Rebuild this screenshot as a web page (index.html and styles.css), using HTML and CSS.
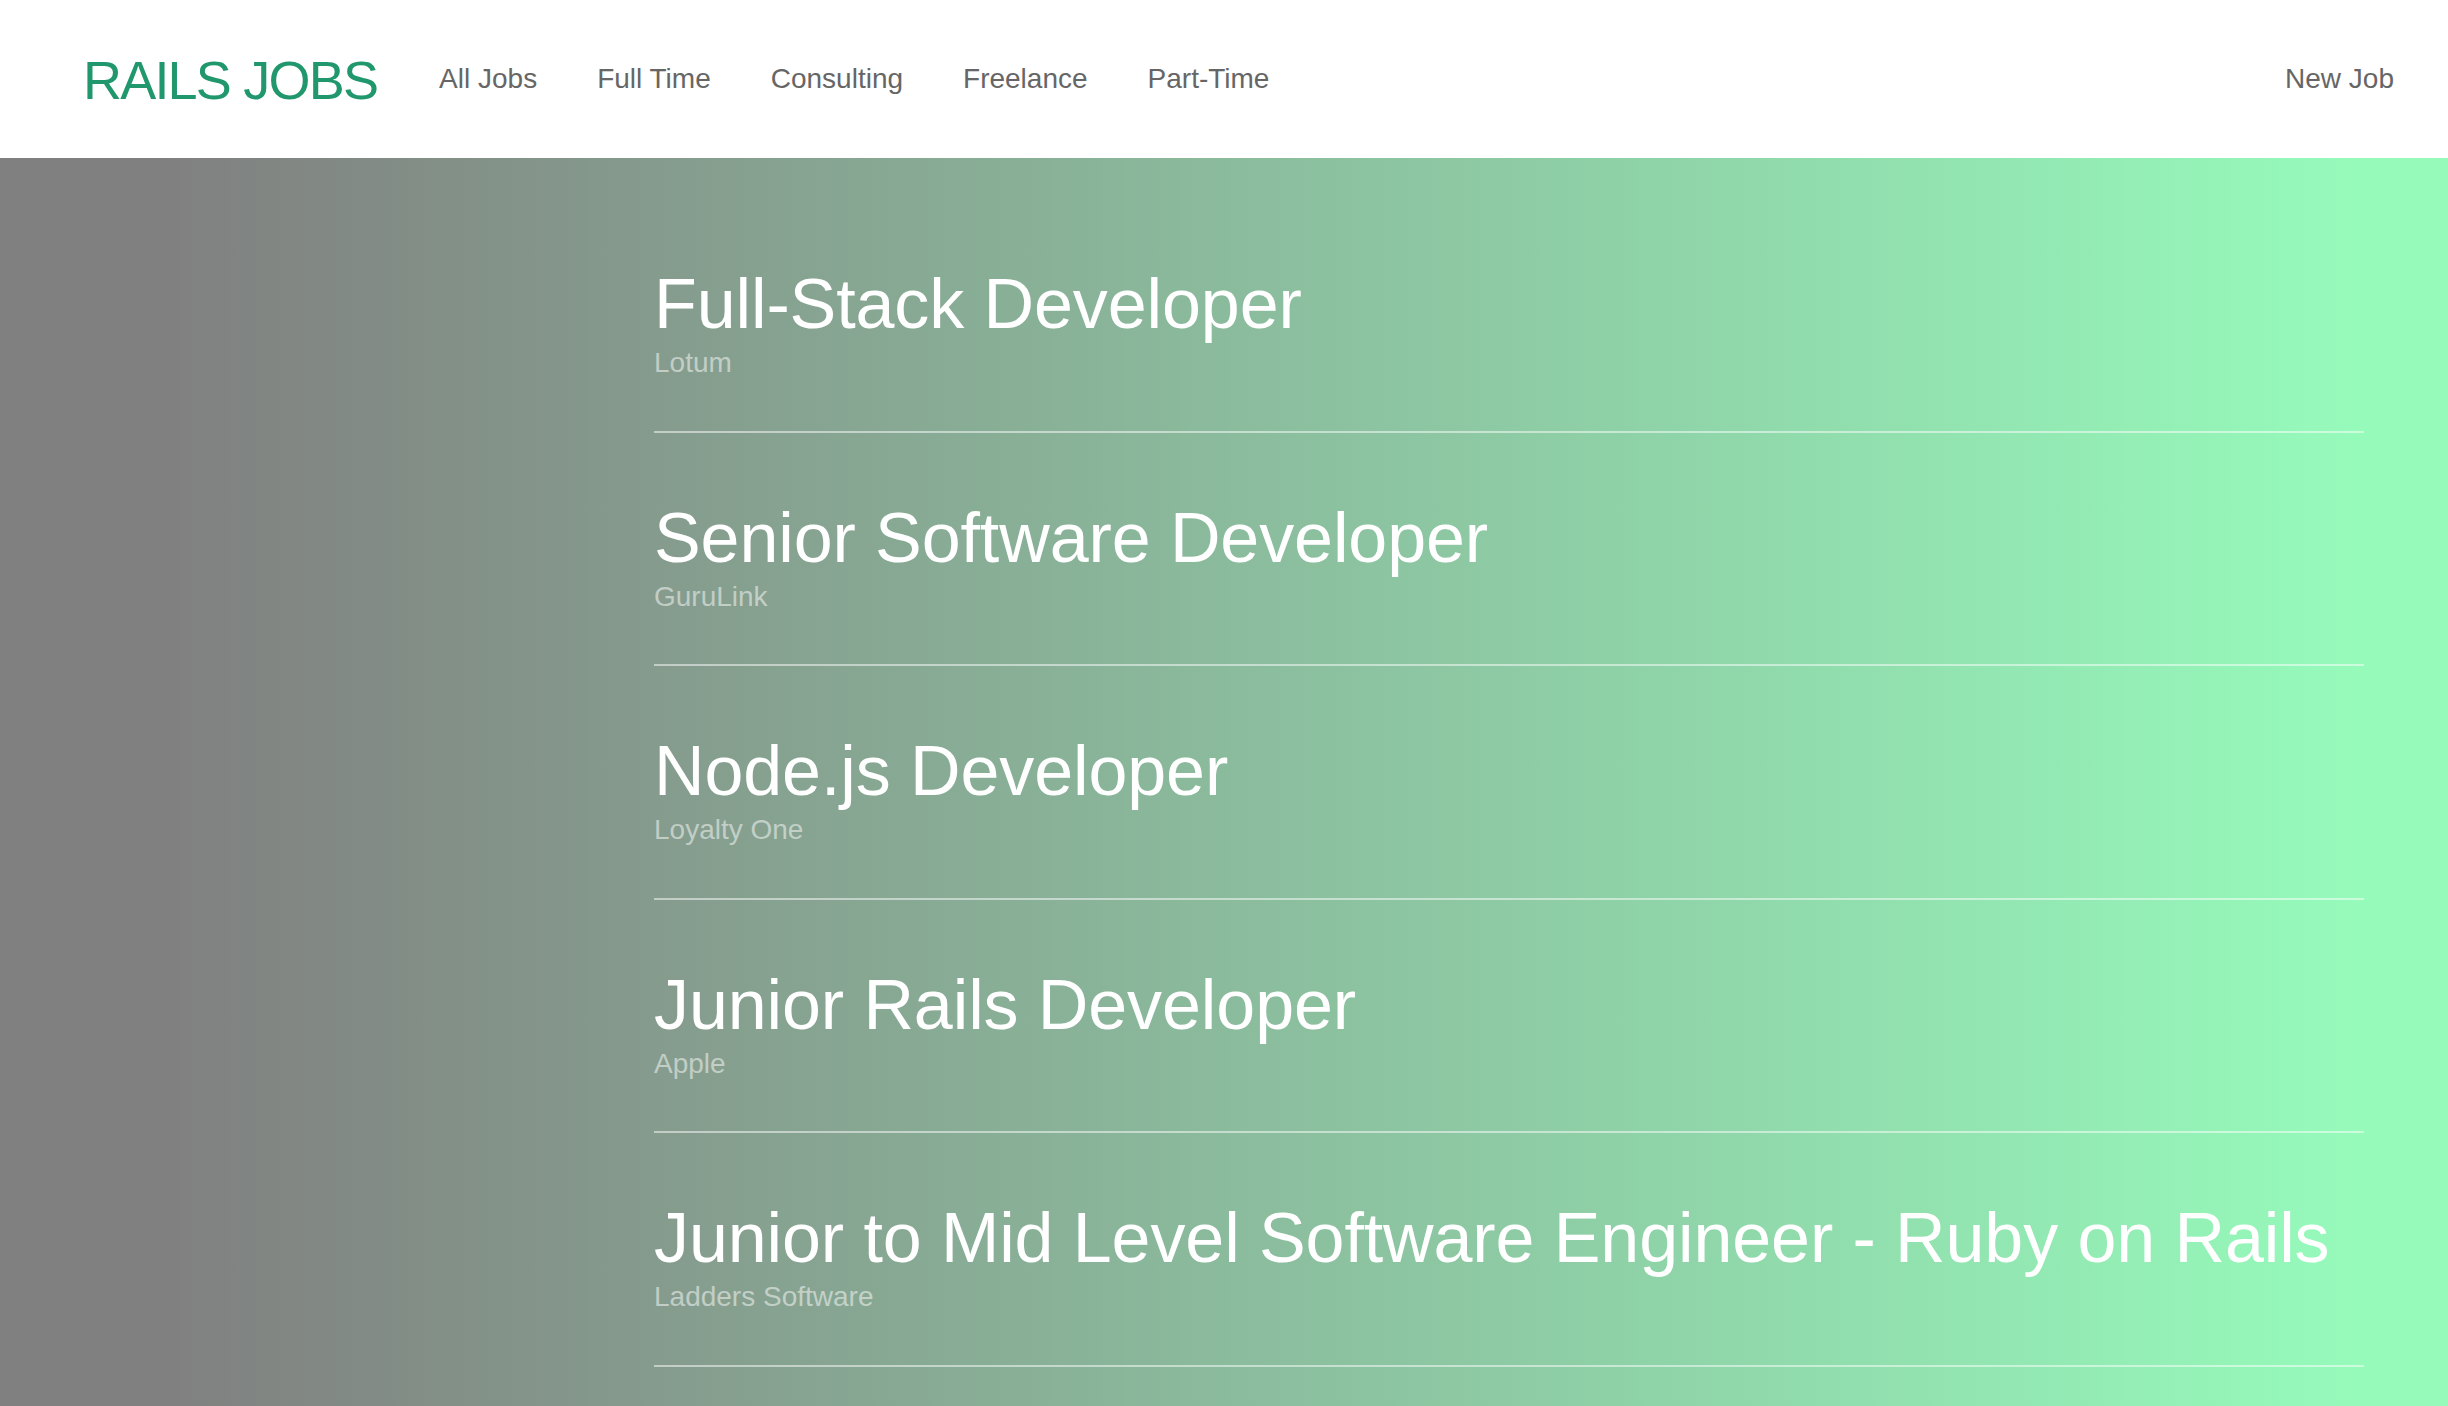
FILE: index.html
```html
<!DOCTYPE html>
<html lang="en">
<head>
<meta charset="utf-8">
<title>Rails Jobs</title>
<link rel="stylesheet" href="styles.css">
</head>
<body>
<header class="topbar">
  <a class="logo" href="#">RAILS JOBS</a>
  <nav class="nav">
    <a href="#">All Jobs</a>
    <a href="#">Full Time</a>
    <a href="#">Consulting</a>
    <a href="#">Freelance</a>
    <a href="#">Part-Time</a>
  </nav>
  <a class="new-job" href="#">New Job</a>
</header>
<main class="page">
  <ul class="jobs">
    <li class="job"><h2 class="job-title">Full-Stack Developer</h2><p class="job-company">Lotum</p></li>
    <li class="job"><h2 class="job-title">Senior Software Developer</h2><p class="job-company">GuruLink</p></li>
    <li class="job"><h2 class="job-title">Node.js Developer</h2><p class="job-company">Loyalty One</p></li>
    <li class="job"><h2 class="job-title">Junior Rails Developer</h2><p class="job-company">Apple</p></li>
    <li class="job"><h2 class="job-title">Junior to Mid Level Software Engineer - Ruby on Rails</h2><p class="job-company">Ladders Software</p></li>
  </ul>
</main>
</body>
</html>
```
FILE: styles.css
```css
html, body {
  margin: 0;
  padding: 0;
}
body {
  font-family: "Liberation Sans", Arial, sans-serif;
  background: linear-gradient(to right, #808080 7%, #96fabb 96%);
  min-height: 100vh;
}
a {
  text-decoration: none;
}
.topbar {
  height: 158px;
  box-sizing: border-box;
  background: #ffffff;
  display: flex;
  align-items: center;
  padding: 0 54px 0 83px;
}
.logo {
  color: #20976c;
  font-size: 54px;
  letter-spacing: -1.8px;
  line-height: 1;
  margin-right: 62px;
  margin-top: 2px;
}
.nav {
  display: flex;
  gap: 60px;
  flex: 1;
}
.nav a, .new-job {
  color: #666666;
  font-size: 28px;
  line-height: 1;
}
.page {
  padding: 41px 84px 0 654px;
}
.jobs {
  list-style: none;
  margin: 0;
  padding: 0;
}
.job {
  padding: 70px 0 51px;
  border-bottom: 2px solid rgba(255, 255, 255, 0.5);
}
.job-title {
  margin: 0;
  font-weight: normal;
  font-size: 70px;
  line-height: 1;
  color: #ffffff;
  letter-spacing: -0.1px;
}
.job-company {
  margin: 7px 0 0;
  font-size: 28px;
  line-height: 1.2;
  color: rgba(255, 255, 255, 0.5);
}
```
